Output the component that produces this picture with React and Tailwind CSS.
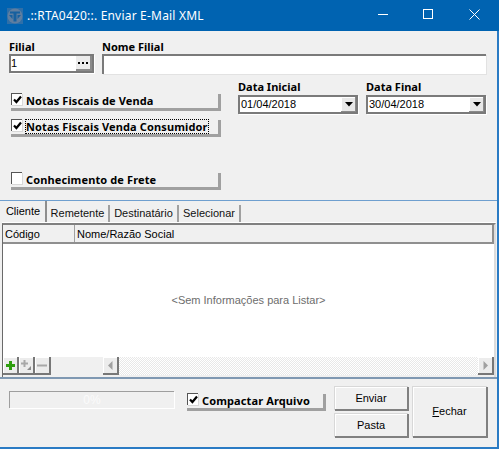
import React from "react";

const BOLD = "font-bold [font-family:'Noto_Sans',sans-serif]";

function CheckButton({ label, checked, focus, className = "" }) {
  return (
    <div className={`flex h-[17px] items-start border-r-[3px] border-b-[3px] border-[#a0a0a0] ${className}`}>
      <div className="mt-[-1px] flex h-[12px] w-[11px] shrink-0 items-center justify-center border-t border-l border-t-[#555] border-l-[#555] bg-white shadow-[1px_1px_0_#d8d8d8]">
        {checked && (
          <svg width="9" height="9" viewBox="0 0 9 9">
            <path d="M1 4.5 L3.4 7 L8 1.5" fill="none" stroke="#000" strokeWidth="2.2" />
          </svg>
        )}
      </div>
      <span
        className={`ml-[4px] text-[11px] leading-[13px] tracking-[0.12px] whitespace-nowrap text-black ${BOLD} ${focus ? "outline-1 outline-black outline-dotted" : ""}`}
      >
        {label}
      </span>
    </div>
  );
}

function Combo({ value }) {
  return (
    <div className="flex h-[19px] items-stretch border-2 border-[#7a7a7a] bg-white shadow-[1px_1px_0_#fff]">
      <span className="flex-1 pl-[1px] text-[11px] leading-[15px] text-black">{value}</span>
      <div className="flex w-[15px] items-center justify-center bg-[#e8e8e8] shadow-[inset_-1px_-1px_0_#8a8a8a,inset_1px_1px_0_#fff]">
        <svg width="8" height="5" viewBox="0 0 8 5">
          <path d="M0 0 H8 L4 4.5 Z" fill="#000" />
        </svg>
      </div>
    </div>
  );
}

function Label({ children, className = "h-[14px]" }) {
  return <div className={`${className} text-[11px] leading-[13px] whitespace-nowrap text-black ${BOLD}`}>{children}</div>;
}

function Tab({ children, active, w }) {
  return (
    <div
      className={
        active
          ? `flex h-[21px] ${w} items-center justify-center border-r-2 border-[#8e8e8e] pr-[2px] text-[11px] text-black`
          : `mt-[4px] flex h-[17px] ${w} items-center justify-center border-r-2 border-[#a0a0a0] text-[11px] text-[#111]`
      }
    >
      {children}
    </div>
  );
}

function MiniBtn({ children }) {
  return (
    <div className="flex h-[18px] w-[16px] items-center justify-center border-r-2 border-b-2 border-[#777] bg-[#ececec] shadow-[inset_1px_1px_0_#fff]">
      {children}
    </div>
  );
}

function Btn({ children, className = "" }) {
  return (
    <div className={`flex items-center justify-center border-r-2 border-b-2 border-r-[#808080] border-b-[#808080] bg-[#f0f0f0] text-[11px] text-black shadow-[inset_1px_1px_0_#fff,-1px_-1px_0_#d8d8d8] ${className}`}>
      {children}
    </div>
  );
}

export default function App() {
  return (
    <div className="flex h-[449px] w-[499px] flex-col overflow-hidden bg-[#2a7bc4] [font-family:'Liberation_Sans',sans-serif]">
      {/* Title bar */}
      <div className="flex h-[31px] shrink-0 items-center bg-[#0063b1] text-white">
        <svg className="ml-[7px]" width="16" height="16" viewBox="0 0 16 16">
          <rect width="16" height="16" fill="#2f6fa8" />
          <circle cx="8" cy="8" r="7.5" fill="#5f7ea0" />
          <path d="M3 3.5 H13 V5.5 H9.5 V13.5 H6.5 V5.5 H3 Z" fill="#16609f" />
          <path d="M2 7 L5.5 7 L5.5 11 Z M14 7 L10.5 7 L10.5 11 Z" fill="#16609f" />
        </svg>
        <span className="ml-[4px] text-[12px] tracking-[0.2px] whitespace-nowrap [font-family:'Noto_Sans',sans-serif]">.::RTA0420::. Enviar E-Mail XML</span>
        <div className="mr-[19px] mb-[3px] ml-auto flex items-center">
          <svg className="mr-[35px]" width="10" height="11" viewBox="0 0 10 11">
            <path d="M0 5.5 H10" stroke="#fff" />
          </svg>
          <svg className="mr-[36px]" width="10" height="10" viewBox="0 0 10 10">
            <rect x="0.5" y="0.5" width="9" height="9" fill="none" stroke="#fff" />
          </svg>
          <svg width="11" height="11" viewBox="0 0 11 11">
            <path d="M0.5 0.5 L10.5 10.5 M10.5 0.5 L0.5 10.5" stroke="#fff" />
          </svg>
        </div>
      </div>

      {/* Window body */}
      <div className="mr-[2px] flex h-[416px] flex-col bg-[#f0f0f0]">
        {/* Form */}
        <div className="flex h-[170px] shrink-0 flex-col border-b border-[#6f9fcf] pt-[9px] pl-[9px]">
          <div className="flex gap-[8px]">
            <div className="w-[85px]">
              <Label>Filial</Label>
              <div className="flex h-[19px] items-stretch border-2 border-[#7a7a7a] bg-white shadow-[1px_1px_0_#fff]">
                <span className="flex-1 text-[11px] leading-[15px] text-black">1</span>
                <div className="flex w-[16px] items-center justify-center gap-[2px] border-r-2 border-b-2 border-[#8a8a8a] bg-[#ececec]">
                  <i className="h-[2px] w-[2px] bg-black" />
                  <i className="h-[2px] w-[2px] bg-black" />
                  <i className="h-[2px] w-[2px] bg-black" />
                </div>
              </div>
            </div>
            <div className="w-[384px]">
              <Label>Nome Filial</Label>
              <div className="h-[20px] border-t-2 border-l-2 border-[#7a7a7a] bg-white shadow-[1px_1px_0_#e2e2e2]" />
            </div>
          </div>

          <div className="flex">
            <div className="ml-[2px] flex w-[210px] flex-col pt-[20px]">
              <CheckButton label="Notas Fiscais de Venda" checked />
              <CheckButton label="Notas Fiscais Venda Consumidor" checked focus className="mt-[9px]" />
              <CheckButton label="Conhecimento de Frete" className="mt-[36px]" />
            </div>
            <div className="ml-[17px] flex pt-[6px]">
              <div className="w-[120px]">
                <Label className="h-[15px]">Data Inicial</Label>
                <Combo value="01/04/2018" />
              </div>
              <div className="ml-[8px] w-[120px]">
                <Label className="h-[15px]">Data Final</Label>
                <Combo value="30/04/2018" />
              </div>
            </div>
          </div>
        </div>

        {/* Tabs */}
        <div className="flex h-[22px] shrink-0 pl-[3px]">
          <Tab active w="w-[44px]">Cliente</Tab>
          <Tab w="w-[63px]">Remetente</Tab>
          <Tab w="w-[69px]">Destinatário</Tab>
          <Tab w="w-[62px]">Selecionar</Tab>
        </div>

        {/* Grid */}
        <div className="mr-[1px] ml-[2px] flex h-[154px] shrink-0 flex-col border-t-2 border-r-2 border-l border-t-[#808080] border-r-[#dcdcdc] border-l-[#6a6a6a] bg-white shadow-[0_-1px_0_#fff]">
          <div className="flex h-[19px] shrink-0 items-center border-r-2 border-b-2 border-[#8f8f8f] bg-[#f0f0f0] text-[11px] text-black">
            <div className="h-full w-[72px] border-r border-[#a0a0a0] pl-[2px] leading-[19px]">Código</div>
            <div className="pt-[2px] pl-[2px]">Nome/Razão Social</div>
          </div>
          <div className="flex flex-1 items-center justify-center text-[11px] text-[#6d6d6d]">
            &lt;Sem Informações para Listar&gt;
          </div>
          <div className="flex h-[20px] shrink-0 items-start bg-[#f0f0f0]">
            <MiniBtn>
              <svg width="11" height="11" viewBox="0 0 11 11"><path d="M4 1 H7 V4 H10 V7 H7 V10 H4 V7 H1 V4 H4 Z" fill="#2e9e0e" /></svg>
            </MiniBtn>
            <MiniBtn>
              <svg width="12" height="12" viewBox="0 0 12 12"><path d="M3.5 1 H5.5 V3.5 H8 V5.5 H5.5 V8 H3.5 V5.5 H1 V3.5 H3.5 Z" fill="#a8a8a8" /><path d="M11 7 V11 H7 Z" fill="#8c8c8c" /></svg>
            </MiniBtn>
            <MiniBtn>
              <svg width="11" height="3" viewBox="0 0 11 3"><rect width="10" height="2" y="0.5" fill="#a8a8a8" /></svg>
            </MiniBtn>
            <div className="ml-[52px] flex flex-1 items-start">
              <MiniBtn>
                <svg width="5" height="9" viewBox="0 0 5 9"><path d="M4.5 0 V9 L0 4.5 Z" fill="#a0a0a0" /></svg>
              </MiniBtn>
              <div className="h-[18px] flex-1 bg-[repeating-conic-gradient(#e8e8e8_0_25%,#ffffff_0_50%)] bg-[length:2px_2px]" />
              <MiniBtn>
                <svg width="5" height="9" viewBox="0 0 5 9"><path d="M0.5 0 V9 L5 4.5 Z" fill="#a0a0a0" /></svg>
              </MiniBtn>
            </div>
          </div>
        </div>

        {/* Bottom panel */}
        <div className="flex flex-1 border-t-2 border-[#7f98b2] pl-[9px]">
          <div className="mt-[12px] flex h-[17px] w-[165px] items-center justify-center border-t border-l border-t-[#9e9e9e] border-l-[#9e9e9e] text-[12px] text-[#fbfbfb] shadow-[1px_1px_0_#fff]">
            0%
          </div>
          <CheckButton label="Compactar Arquivo" checked className="mt-[15px] ml-[13px] w-[139px]" />
          <div className="mt-[8px] ml-[9px] flex flex-col gap-[3px]">
            <Btn className="h-[24px] w-[74px]">Enviar</Btn>
            <Btn className="h-[24px] w-[74px]">Pasta</Btn>
          </div>
          <Btn className="mt-[8px] ml-[4px] h-[51px] w-[75px]">
            <span><u>F</u>echar</span>
          </Btn>
        </div>
      </div>
    </div>
  );
}
